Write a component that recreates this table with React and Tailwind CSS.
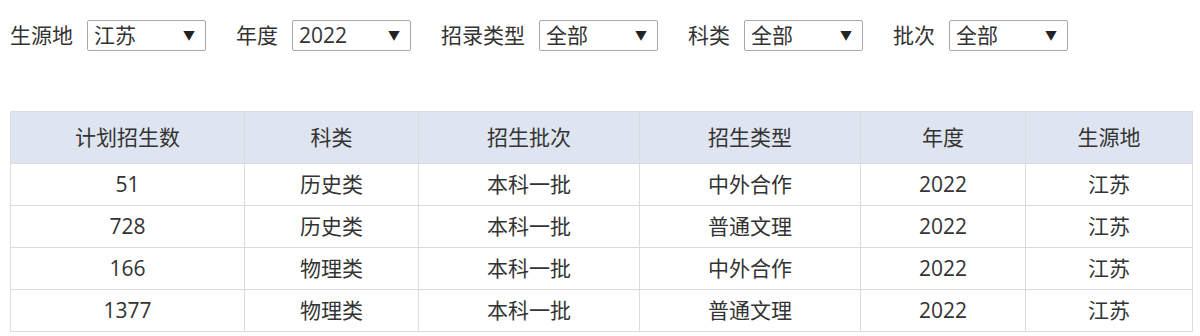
import React from "react";

const filters = [
  { label: "生源地", value: "江苏" },
  { label: "年度", value: "2022" },
  { label: "招录类型", value: "全部" },
  { label: "科类", value: "全部" },
  { label: "批次", value: "全部" },
];

const columns = [
  { title: "计划招生数", width: "w-[234px]" },
  { title: "科类", width: "w-[174px]" },
  { title: "招生批次", width: "w-[221px]" },
  { title: "招生类型", width: "w-[221px]" },
  { title: "年度", width: "w-[165px]" },
  { title: "生源地", width: "w-[167px]" },
];

const rows = [
  ["51", "历史类", "本科一批", "中外合作", "2022", "江苏"],
  ["728", "历史类", "本科一批", "普通文理", "2022", "江苏"],
  ["166", "物理类", "本科一批", "中外合作", "2022", "江苏"],
  ["1377", "物理类", "本科一批", "普通文理", "2022", "江苏"],
];

const Select = ({ value }) => (
  <div className="flex items-center justify-between w-[119px] h-[31px] border border-[#a9a9a9] rounded-[2px] bg-white pl-[6px] pr-[10px]">
    <span>{value}</span>
    <span className="text-[12px] text-[#222]">▼</span>
  </div>
);

const App = () => {
  return (
    <div
      className="w-[1200px] h-[336px] bg-white text-[#333] text-[21px] leading-none overflow-hidden"
      style={{ fontFamily: '"Open Sans", "Noto Sans CJK SC", sans-serif' }}
    >
      <div className="flex items-center pl-[10px] pt-[20px]">
        {filters.map((f, i) => (
          <div key={f.label} className={`flex items-center gap-[14px] ${i > 0 ? "ml-[30px]" : ""}`}>
            <span>{f.label}</span>
            <Select value={f.value} />
          </div>
        ))}
      </div>

      <table className="ml-[10px] mt-[60px] border-collapse table-fixed w-[1183px]">
        <thead>
          <tr className="bg-[#dfe5f0]">
            {columns.map((c) => (
              <th key={c.title} className={`${c.width} h-[52px] border border-[#d9dde3] font-normal text-center`}>
                {c.title}
              </th>
            ))}
          </tr>
        </thead>
        <tbody>
          {rows.map((r, i) => (
            <tr key={i}>
              {r.map((cell, j) => (
                <td key={j} className="h-[42px] border border-[#dcdcdc] text-center">
                  {cell}
                </td>
              ))}
            </tr>
          ))}
        </tbody>
      </table>
    </div>
  );
};

export default App;
